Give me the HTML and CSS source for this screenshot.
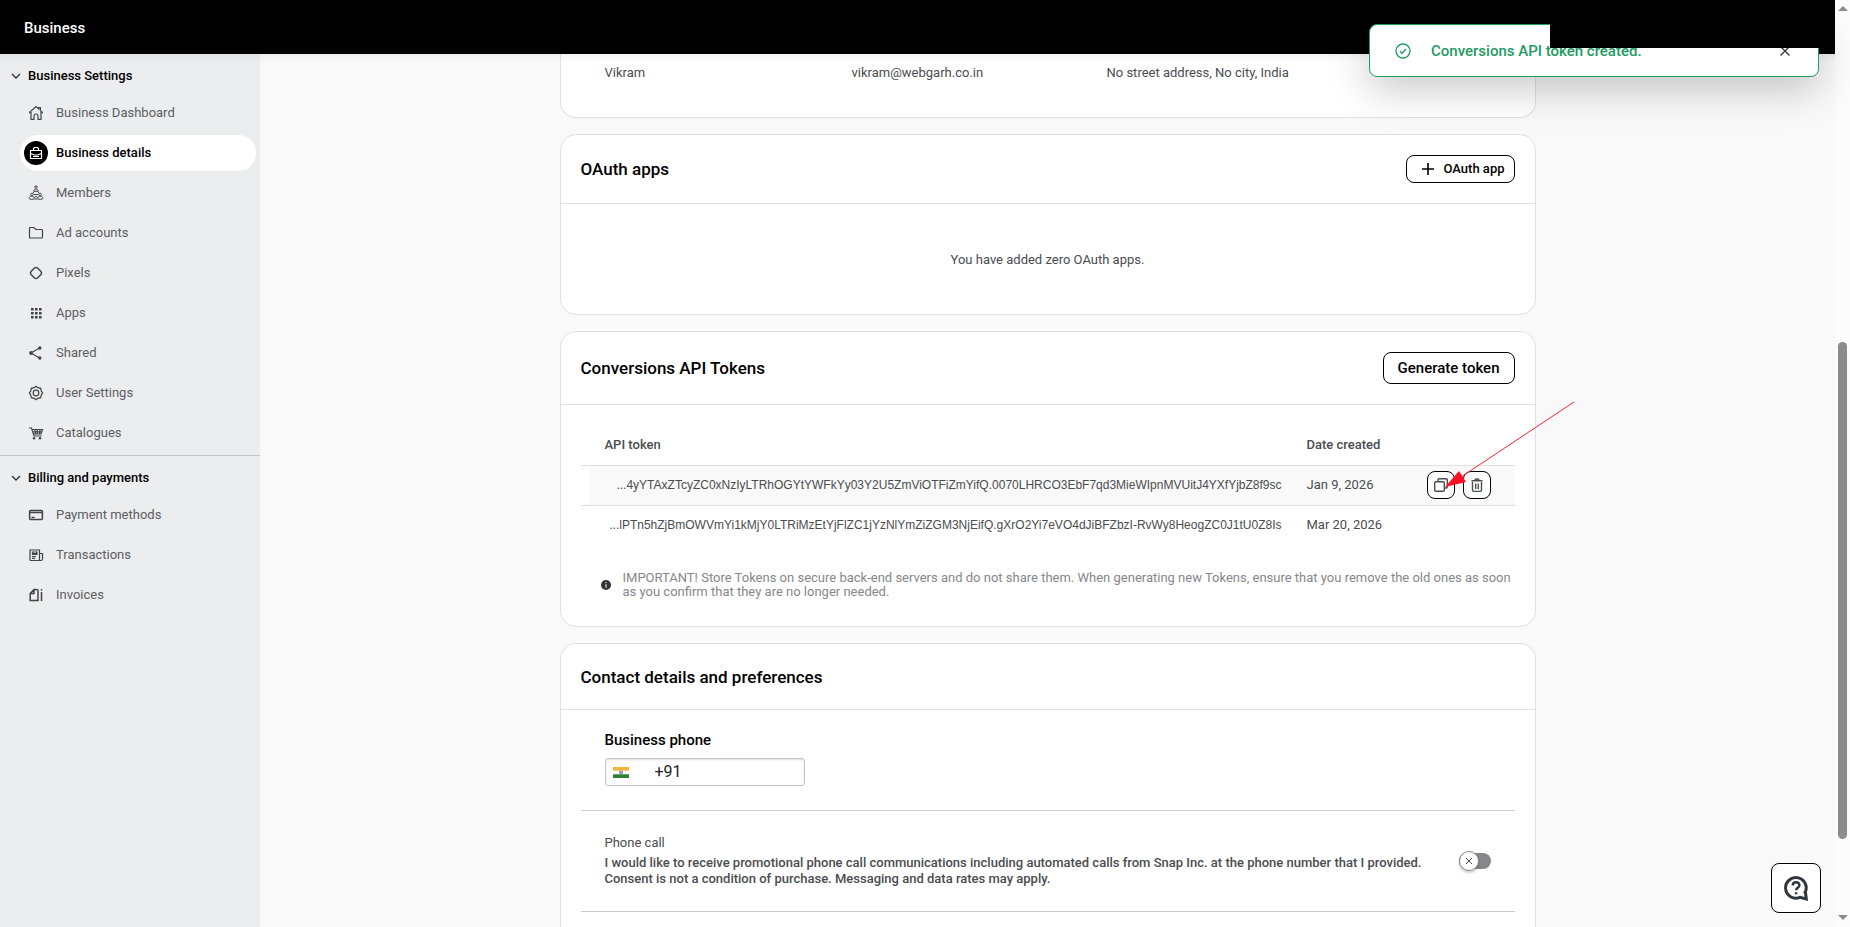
FILE: index.html
```html
<!DOCTYPE html>
<html lang="en">
<head>
<meta charset="utf-8">
<title>Business details</title>
<link rel="stylesheet" href="styles.css">
</head>
<body>
<div class="app">
  <header class="topbar"><a class="brand" href="#">Business</a></header>
  <div class="body">
    <nav class="sidebar" aria-label="Settings">
      <button class="group" type="button"><svg width="10" height="10" viewBox="0 0 10 10"><path d="M1 3l4 4 4-4"/></svg>Business Settings</button>
      <ul class="items">
        <li><a class="item" href="#"><span class="ico"><svg viewBox="0 0 16 16"><path d="M1.600 8.300V7.200L8 1.500l2.600 2.400V2.600h1.800v3l2 1.600v1.100M3 7v7.400h3v-3.400a2 2 0 0 1 4 0v3.400h3V7"/></svg></span>Business Dashboard</a></li>
        <li><a class="item active" href="#"><span class="ico"><svg viewBox="0 0 16 16"><path d="M2.500 5.500h11v8h-11zM5.500 5.500v-2l1-1h3l1 1v2M2.500 8.500l4 1.500h3l4-1.500M5 11.500h6"/></svg></span>Business details</a></li>
        <li><a class="item" href="#"><span class="ico thin"><svg viewBox="0 0 16 16"><circle cx="8" cy="2" r="1.200"/><path d="M5.800 6.300c0-3 4.400-3 4.400 0zM6.300 6.500 5 8m4.700-1.500L11 8"/><circle cx="4" cy="9.500" r="1.300"/><circle cx="12" cy="9.500" r="1.300"/><path d="M1.200 13.500c0-3.200 5-3.200 5 0 0 1.200-5 1.200-5 0zM9.800 13.500c0-3.200 5-3.200 5 0 0 1.200-5 1.200-5 0zM6.300 12.500c.8-1.200 2.600-1.200 3.400 0M6.200 14h3.600M6 9.500h4"/></svg></span>Members</a></li>
        <li><a class="item" href="#"><span class="ico"><svg viewBox="0 0 16 16"><path d="M1.500 3.500q0-1 1-1H6l1.800 2h5.700q1 0 1 1v6.500q0 1-1 1h-11q-1 0-1-1z"/></svg></span>Ad accounts</a></li>
        <li><a class="item" href="#"><span class="ico bold"><svg viewBox="0 0 16 16"><path d="M6.500 3Q8 1.800 9.500 3L13 6.500q1.200 1.500 0 3L9.500 13q-1.500 1.200-3 0L3 9.500q-1.200-1.500 0-3z"/></svg></span>Pixels</a></li>
        <li><a class="item" href="#"><span class="ico solid"><svg viewBox="0 0 16 16"><path d="M3 3h2.600v2.600H3zM7 3h2.600v2.600H7zM11 3h2.600v2.600H11zM3 7h2.600v2.600H3zM7 7h2.600v2.600H7zM11 7h2.600v2.600H11zM3 11h2.600v2.600H3zM7 11h2.600v2.600H7zM11 11h2.600v2.600H11z"/></svg></span>Apps</a></li>
        <li><a class="item" href="#"><span class="ico"><svg viewBox="0 0 16 16"><path d="M11.500 3 3 8l8.500 5"/><g class="fill"><circle cx="11.800" cy="3" r="1.700"/><circle cx="3" cy="8" r="1.900"/><circle cx="11.800" cy="13" r="1.700"/></g></svg></span>Shared</a></li>
        <li><a class="item" href="#"><span class="ico"><svg viewBox="0 0 16 16"><path d="M8 1.300 9.800 2.700 12.700 3.300 13.300 6.200 14.700 8 13.300 9.800 12.700 12.700 9.800 13.300 8 14.700 6.200 13.300 3.300 12.700 2.700 9.800 1.300 8 2.700 6.200 3.300 3.300 6.200 2.700z"/><circle cx="8" cy="8" r="2.800"/></svg></span>User Settings</a></li>
        <li><a class="item" href="#"><span class="ico"><svg viewBox="0 0 16 16"><path d="M1 3h2.500L6 11h7.500M3.800 4.500h10.700L13 9H5.300M4.500 6.800h9M7 4.500 7.500 9M9.300 4.500V9M12 4.500 11.500 9"/><g class="fill"><circle cx="6" cy="13.300" r="1.200"/><circle cx="12" cy="13.300" r="1.200"/></g></svg></span>Catalogues</a></li>
      </ul>
      <hr class="rule">
      <button class="group" type="button"><svg width="10" height="10" viewBox="0 0 10 10"><path d="M1 3l4 4 4-4"/></svg>Billing and payments</button>
      <ul class="items">
        <li><a class="item" href="#"><span class="ico bold"><svg viewBox="0 0 16 16"><rect x="1.600" y="3.500" width="12.800" height="9" rx="1"/><path d="M2 5.500h12M3.500 10.500h3"/></svg></span>Payment methods</a></li>
        <li><a class="item" href="#"><span class="ico"><svg viewBox="0 0 16 16"><path d="M2 3h9.500v10.500H3q-1 0-1-1zM11.500 6.500h3v5.500q0 1.500-1.500 1.500h-2M4 7.500h5.500M4 9.500h4M4 11.300h3M4.500 5h4.500v1.500H4.500z"/></svg></span>Transactions</a></li>
        <li><a class="item" href="#"><span class="ico bold"><svg viewBox="0 0 16 16"><path d="M2.200 6.500 6 2.500h2.500q1.500 0 1.500 1.500v9.500H2.200zM6 3v3.500H2.500"/><path d="M13.500 5v9M13.500 2v1.500"/></svg></span>Invoices</a></li>
      </ul>
    </nav>
    <main class="main">
      <div class="cards">
        <section class="card address">
          <span>Vikram</span><span>vikram@webgarh.co.in</span><span>No street address, No city, India</span>
        </section>
        <section class="card">
          <div class="card-head"><h2>OAuth apps</h2>
            <button class="btn" type="button"><svg width="14" height="14" viewBox="0 0 14 14"><path d="M7 1v12M1 7h12"/></svg>OAuth app</button></div>
          <p class="empty">You have added zero OAuth apps.</p>
        </section>
        <section class="card">
          <div class="card-head tall"><h2>Conversions API Tokens</h2>
            <button class="btn large" type="button">Generate token</button></div>
          <div class="tokens">
            <table>
              <thead><tr><th class="token-head">API token</th><th class="date">Date created</th><th class="actions"></th></tr></thead>
              <tbody>
                <tr class="hovered">
                  <td class="token"><span>...4yYTAxZTcyZC0xNzIyLTRhOGYtYWFkYy03Y2U5ZmViOTFiZmYifQ.0070LHRCO3EbF7qd3MieWIpnMVUitJ4YXfYjbZ8f9sc</span></td>
                  <td class="date">Jan 9, 2026</td>
                  <td class="actions"><div class="pair">
                    <button class="square" type="button" aria-label="Copy token"><svg viewBox="0 0 16 16"><rect x="1.700" y="4.700" width="9.600" height="9.600" rx="1.200"/><path d="M5 4.500V2.700q0-1 1-1h7.300q1 0 1 1V10q0 1-1 1h-1.800"/></svg></button>
                    <button class="square" type="button" aria-label="Delete token"><svg viewBox="0 0 16 16"><path d="M3.500 5v8q0 1.400 1.400 1.400h6.200q1.400 0 1.400-1.400V5M2.500 3.800h11M6 3.500q0-1.500 1.200-1.500h1.600Q10 2 10 3.500M6.700 6.500v5.500M9.300 6.500v5.500"/></svg></button>
                    <svg class="pointer" width="132" height="90" viewBox="0 0 132 90"><path class="shaft" d="M129 1 10 80"/><path class="tip" d="M0 86 14 70 21 81z"/></svg>
                  </div></td>
                </tr>
                <tr>
                  <td class="token"><span>...lPTn5hZjBmOWVmYi1kMjY0LTRiMzEtYjFlZC1jYzNlYmZiZGM3NjEifQ.gXrO2Yi7eVO4dJiBFZbzI-RvWy8HeogZC0J1tU0Z8Is</span></td>
                  <td class="date">Mar 20, 2026</td>
                  <td class="actions"></td>
                </tr>
              </tbody>
            </table>
            <div class="note"><svg width="10" height="10" viewBox="0 0 10 10"><circle cx="5" cy="5" r="5"/><path d="M5 4.200v3.600M5 2v1.200"/></svg>
              <p>IMPORTANT! Store Tokens on secure back-end servers and do not share them. When generating new Tokens, ensure that you remove the old ones as soon as you confirm that they are no longer needed.</p></div>
          </div>
        </section>
        <section class="card last">
          <div class="card-head short"><h2>Contact details and preferences</h2></div>
          <div class="contact">
            <div class="phone">
              <label for="phone">Business phone</label>
              <div class="field">
                <svg width="16" height="11" viewBox="0 0 16 11" role="img" aria-label="India"><path fill="#f4b73c" d="M0 0h16v4H0z"/><path fill="#fff" d="M0 3.700h16v3.800H0z"/><path fill="#2f8132" d="M0 7.300h16V11H0z"/><circle cx="8" cy="5.500" r="1.500" fill="#aab4da" stroke="#6477b8"/></svg>
                <input id="phone" type="tel" value="+91">
              </div>
            </div>
            <div class="consent">
              <div><label class="consent-title" for="call">Phone call</label>
                <p>I would like to receive promotional phone call communications including automated calls from Snap Inc. at the phone number that I provided. Consent is not a condition of purchase. Messaging and data rates may apply.</p></div>
              <label class="toggle"><input id="call" type="checkbox"><span class="knob"><svg width="8" height="8" viewBox="0 0 8 8"><path d="M1 1l6 6M7 1 1 7"/></svg></span></label>
            </div>
          </div>
        </section>
      </div>
    </main>
    <div class="topshade"></div>
  </div>
  <div class="scrollbar" aria-hidden="true"><span class="up"></span><span class="track"><span class="thumb"></span></span><span class="down"></span></div>
  <div class="toast" role="status">
    <svg width="16" height="16" viewBox="0 0 16 16"><circle cx="8" cy="8" r="7"/><path d="M5 8.200l2 2 4-4.200"/></svg>
    <span>Conversions API token created.</span>
    <button type="button" aria-label="Close"><svg width="12" height="12" viewBox="0 0 12 12"><path d="M1.500 1.500l9 9M10.500 1.500l-9 9"/></svg></button>
  </div>
  <div class="account"></div>
  <button class="help" type="button" aria-label="Help"><svg width="26" height="26" viewBox="0 0 26 26"><path d="M21.500 18.500A10.300 10.300 0 1 0 17 22.300L23.300 24 22.500 17.500"/><path class="mark" d="M9.800 10.500c0-4.300 6.800-4 6.600-.3 0 2.600-3.300 2.400-3.300 5M13.100 17.200v2"/></svg></button>
</div>
</body>
</html>
```
FILE: styles.css
```css
:root {
  --text: #4a4d50;
  --line: #e1e1e1;
  --green: #219b62;
}
* { box-sizing: border-box; }
body {
  margin: 0;
  font: 13px/16px Roboto, "Liberation Sans", sans-serif;
  color: var(--text);
  background: #f9f9f9;
}
h2, p, ul { margin: 0; padding: 0; }
ul { list-style: none; }
a { color: inherit; text-decoration: none; }
button { font: inherit; color: inherit; cursor: pointer; }
svg { display: block; flex: none; fill: none; stroke: currentColor; }

.app {
  position: relative;
  display: grid;
  grid-template: 54px 1fr / 1fr 15px;
  height: 100vh;
  overflow: hidden;
}
.topbar {
  background: #000;
  color: #fff;
  padding: 2px 24px 0;
  display: flex;
  align-items: center;
}
.brand { font-size: 15px; font-weight: 500; }
.body {
  position: relative;
  grid-row: 2;
  display: flex;
  min-height: 0;
}
.topshade {
  position: absolute;
  inset: 0 0 auto;
  height: 8px;
  background: linear-gradient(rgba(0, 0, 0, .05), transparent);
}
.scrollbar {
  grid-area: 1 / 2 / 3 / 3;
  display: flex;
  flex-direction: column;
  align-items: center;
  padding: 6px 0 7px;
  background: #fcfcfc;
}
.up, .down { border: 5px solid transparent; }
.up { border-top: 0; border-bottom-color: #8b8b8b; }
.down { border-bottom: 0; border-top-color: #8b8b8b; }
.track { flex: 1; display: flex; align-items: flex-end; padding-bottom: 76px; }
.thumb { width: 9px; height: 60%; border-radius: 5px; background: #8b8b8b; }

/* Sidebar */
.sidebar { width: 260px; flex: none; background: #ecedef; }
.group {
  display: flex;
  align-items: center;
  gap: 7px;
  width: 100%;
  height: 39px;
  padding: 4px 11px 0;
  border: 0;
  background: none;
  color: #000;
  font-weight: 500;
}
.group svg { stroke: #333; stroke-width: 1.4; }
.items { display: grid; gap: 4px; padding: 2px 4px 2px 20px; }
.item {
  display: flex;
  align-items: center;
  gap: 8px;
  height: 36px;
  padding-left: 4px;
  border-radius: 18px;
  color: #5b5e62;
}
.ico {
  display: grid;
  place-items: center;
  width: 24px;
  height: 24px;
  border-radius: 50%;
  color: #414447;
}
.ico svg { width: 16px; height: 16px; stroke-width: 1.2; }
.ico.thin svg { stroke-width: 1; }
.ico.bold svg { stroke-width: 1.5; }
.ico.solid svg, .fill { fill: currentColor; stroke: none; }
.active { background: #fff; color: #000; font-weight: 500; }
.active .ico { background: #000; color: #fff; }
.rule { margin: 2px 0 0; border: 0; border-top: 1px solid #c2c5c8; }

/* Cards */
.main { flex: 1; min-width: 0; overflow: hidden; }
.cards { max-width: 976px; margin: 0 auto; display: grid; gap: 16px; }
.card { background: #fff; border: 1px solid var(--line); border-radius: 16px; }
.address {
  display: grid;
  grid-template-columns: 247fr 255fr 428fr;
  padding: 11px 0 36px 44px;
  border-top: 0;
  border-radius: 0 0 16px 16px;
}
.card-head {
  display: flex;
  align-items: center;
  justify-content: space-between;
  height: 69px;
  padding: 0 20px;
  border-bottom: 1px solid var(--line);
}
.card-head.tall { height: 73px; }
.card-head.short { height: 66px; }
h2 { font-size: 17px; line-height: 24px; font-weight: 500; color: #000; }
.btn {
  display: flex;
  align-items: center;
  gap: 8px;
  height: 28px;
  padding: 0 9px 0 14px;
  border: 1px solid #000;
  border-radius: 8px;
  background: #fff;
  color: #000;
  font-weight: 500;
}
.btn svg { stroke-width: 1.6; }
.btn.large { height: 32px; padding: 0 14px; font-size: 15px; }
.empty { padding: 48px 0 46px; text-align: center; }

.tokens { padding: 20px 20px 27px; }
table { width: 100%; table-layout: fixed; border-collapse: collapse; }
th, td { height: 40px; padding: 0; text-align: left; border-bottom: 1px solid var(--line); }
th { font-weight: 500; }
tbody tr:last-child td { border-bottom: 0; }
.token-head { padding-left: 24px; }
.token { text-align: right; font-family: "Liberation Sans", sans-serif; font-size: 12px; white-space: nowrap; }
.token span { display: block; margin-left: 8px; padding-right: 25px; line-height: 39px; }
.hovered .token span, .hovered .date, .hovered .actions { background: #f9f9f9; }
.date { width: 120px; }
.actions { width: 88px; }
.pair { position: relative; display: flex; gap: 8px; }
.square {
  display: grid;
  place-items: center;
  width: 28px;
  height: 28px;
  padding: 0;
  border: 1px solid #000;
  border-radius: 8px;
  background: #fff;
}
.square svg { width: 16px; height: 16px; stroke-width: 1.4; }
.pointer { position: absolute; left: 18px; top: -70px; pointer-events: none; }
.shaft { stroke: #ff2631; stroke-width: 1; }
.tip { fill: #fe1020; stroke: none; }
.note {
  display: flex;
  align-items: center;
  gap: 12px;
  padding: 26px 0 0 20px;
  color: #85888b;
  line-height: 14px;
}
.note svg { color: #fff; }
.note circle { fill: #333; stroke: none; }

.last { border-bottom: 0; border-radius: 16px 16px 0 0; }
.contact { padding: 0 20px 60px; }
.phone { padding: 20px 24px 24px; border-bottom: 1px solid #ccc; }
.phone label { display: block; color: #000; font-size: 15px; line-height: 20px; font-weight: 500; }
.field {
  display: flex;
  align-items: center;
  gap: 24px;
  width: 200px;
  height: 28px;
  margin-top: 8px;
  padding: 0 7px;
  border: 1px solid #c4c4c4;
  border-radius: 3px;
  box-shadow: inset 0 1px 2px rgba(0, 0, 0, .12);
}
.field svg { stroke: none; }
.field input {
  flex: 1;
  min-width: 0;
  padding: 0 0 0 2px;
  border: 0;
  outline: 0;
  background: none;
  font: 16px/24px Roboto, sans-serif;
  color: #222;
}
.consent {
  display: flex;
  align-items: center;
  justify-content: space-between;
  gap: 24px;
  height: 101px;
  padding: 0 24px;
  border-bottom: 1px solid #ccc;
}
.consent-title { display: block; margin-bottom: 4px; }
.consent p { font-weight: 500; }
.toggle {
  display: flex;
  align-items: center;
  flex: none;
  width: 32px;
  height: 16px;
  border-radius: 8px;
  background: #85878a;
}
.toggle input { position: absolute; opacity: 0; }
.knob {
  display: grid;
  place-items: center;
  width: 20px;
  height: 20px;
  border: 1px solid #85878a;
  border-radius: 50%;
  background: #fff;
  box-shadow: 0 2px 3px rgba(0, 0, 0, .2);
}

/* Layers over the page */
.toast {
  position: absolute;
  top: 24px;
  right: 31px;
  display: flex;
  align-items: center;
  width: 450px;
  height: 53px;
  padding: 0 27px 0 25px;
  border: 1px solid var(--green);
  border-radius: 8px;
  background: #fff;
  box-shadow: 0 12px 40px rgba(0, 0, 0, .22);
  color: var(--green);
  font-size: 15px;
  font-weight: 500;
}
.toast span { flex: 1; padding-left: 20px; }
.toast button { padding: 0; border: 0; background: none; color: #333; }
.toast svg { stroke-width: 1.3; }
.account { position: absolute; top: 0; right: 15px; width: 285px; height: 48px; background: #000; }
.help {
  position: absolute;
  right: 29px;
  bottom: 14px;
  display: grid;
  place-items: center;
  width: 50px;
  height: 50px;
  padding: 0;
  border: 1px solid #000;
  border-radius: 8px;
  background: #fff;
  color: #30363b;
}
.help svg { stroke-width: 3; }
.help .mark { stroke-width: 2.5; }
```
